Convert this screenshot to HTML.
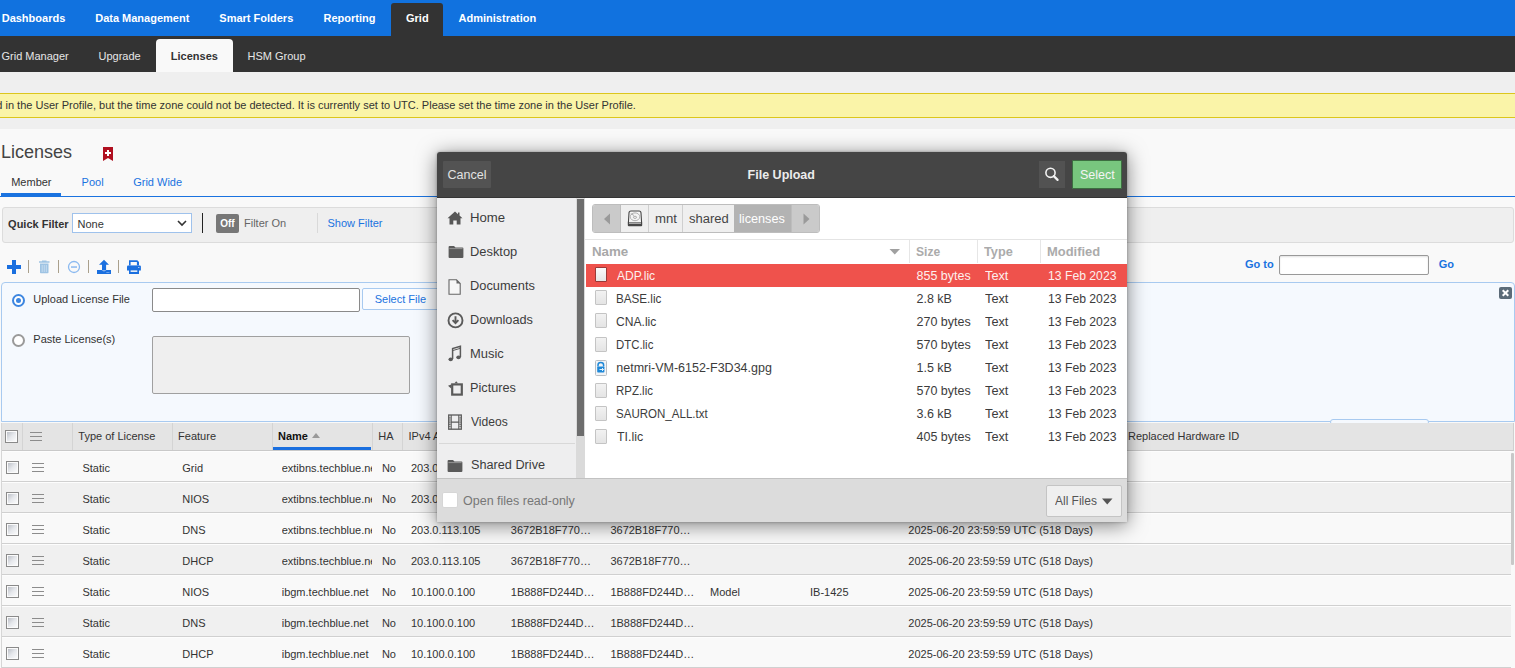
<!DOCTYPE html>
<html><head><meta charset="utf-8">
<style>
*{box-sizing:border-box;margin:0;padding:0}
html,body{width:1515px;height:668px;overflow:hidden;background:#f9f9f9;font-family:"Liberation Sans",sans-serif;font-size:11px;color:#333}
.a{position:absolute;white-space:nowrap}
.t{position:absolute;white-space:nowrap;line-height:14px;height:14px}
#nav{position:absolute;left:0;top:0;width:1515px;height:36px;background:#1172df}
#nav .t{color:#fff;font-weight:bold;top:11px}
#sub{position:absolute;left:0;top:36px;width:1515px;height:36px;background:#333}
#sub .t{color:#e6e6e6;top:13px}
#grey{position:absolute;left:0;top:72px;width:1515px;height:57px;background:#efefef}
#banner{position:absolute;left:-2px;top:93px;width:1520px;height:25px;background:#faf4a8;border-top:1px solid #dcc61c;border-bottom:1px solid #dcc61c}
.blue{color:#1a73e0}
.cb{position:absolute;width:13px;height:13px;border:1px solid #8a8a8a;background:linear-gradient(135deg,#b4b8c0 0%,#e6e8ec 50%,#fff 100%);box-shadow:inset 0 0 0 1px #fbfbfb}
.ham{position:absolute;width:12px;height:9px;border-top:1px solid #8c8c8c;border-bottom:1px solid #8c8c8c}
.ham:after{content:"";position:absolute;left:0;right:0;top:3px;height:1px;background:#8c8c8c}
.row{position:absolute;left:2px;width:1509px;height:31px;border-bottom:1px solid #d0d0d0;box-shadow:inset 0 1px 0 #fdfdfd}
.row .t{top:10px}
.vsep{position:absolute;width:1px;background:#d4d4d4}
</style></head><body>

<div id="nav">
  <div class="t" style="left:1.7px">Dashboards</div>
  <div class="t" style="left:95.2px">Data Management</div>
  <div class="t" style="left:219.3px">Smart Folders</div>
  <div class="t" style="left:323.5px">Reporting</div>
  <div class="a" style="left:391px;top:3px;width:52px;height:33px;background:#333;border-radius:3px 3px 0 0"></div>
  <div class="t" style="left:406px">Grid</div>
  <div class="t" style="left:458.6px">Administration</div>
</div>
<div id="sub">
  <div class="t" style="left:1.5px">Grid Manager</div>
  <div class="t" style="left:98.5px">Upgrade</div>
  <div class="a" style="left:156px;top:3px;width:77px;height:33px;background:#f9f9f9;border-radius:4px 4px 0 0"></div>
  <div class="t" style="left:170.8px;color:#333;font-weight:bold">Licenses</div>
  <div class="t" style="left:247.5px">HSM Group</div>
</div>
<div id="grey"></div>
<div id="banner"><div class="t" style="left:-1.7px;top:4px;color:#333">d in the User Profile, but the time zone could not be detected. It is currently set to UTC. Please set the time zone in the User Profile.</div></div>

<!-- page header -->
<div class="a" style="left:0.9px;top:141.3px;font-size:18px;line-height:22px;color:#444">Licenses</div>
<svg class="a" style="left:103px;top:147px" width="10" height="14" viewBox="0 0 10 14"><path d="M0 0H10V14L5 11L0 14Z" fill="#b01020"/><path d="M4 3H6V5H8V7H6V9H4V7H2V5H4Z" fill="#fff"/></svg>
<div class="t" style="left:11.2px;top:175px">Member</div>
<div class="t blue" style="left:81.6px;top:175px">Pool</div>
<div class="t blue" style="left:133.2px;top:175px">Grid Wide</div>
<div class="a" style="left:0;top:196px;width:1515px;height:1px;background:#1a73e0"></div>
<div class="a" style="left:1px;top:193px;width:60px;height:4px;background:#1a73e0"></div>

<!-- filter bar -->
<div class="a" style="left:2px;top:207px;width:1512px;height:36px;background:#efefef;border:1px solid #dcdcdc;border-radius:3px"></div>
<div class="t" style="left:8.1px;top:217px;font-weight:bold">Quick Filter</div>
<div class="a" style="left:72px;top:213px;width:120px;height:20px;background:#fff;border:1px solid #9fc2ec"></div>
<div class="t" style="left:77.5px;top:217px">None</div>
<svg class="a" style="left:177px;top:219.6px" width="10" height="7" viewBox="0 0 10 7"><path d="M1 1L5 5L9 1" stroke="#333" stroke-width="1.6" fill="none"/></svg>
<div class="a" style="left:202px;top:213px;width:1.2px;height:20px;background:#222"></div>
<div class="a" style="left:216px;top:214px;width:23px;height:19px;background:#777;border-radius:2px;color:#fff;font-weight:bold;font-size:10px;line-height:19px;text-align:center">Off</div>
<div class="t" style="left:244.0px;top:216px;color:#666">Filter On</div>
<div class="a" style="left:317px;top:213px;width:1px;height:20px;background:#d9d9d9"></div>
<div class="t blue" style="left:327.5px;top:216px">Show Filter</div>

<!-- toolbar -->
<svg class="a" style="left:0;top:255px" width="150" height="24" viewBox="0 255 150 24">
  <path d="M7 267H21M14 260V274" stroke="#1a6fdf" stroke-width="4"/>
  <rect x="28" y="260" width="1" height="13" fill="#aaa08c"/>
  <rect x="58" y="260" width="1" height="13" fill="#aaa08c"/>
  <rect x="88" y="260" width="1" height="13" fill="#aaa08c"/>
  <rect x="118" y="260" width="1" height="13" fill="#aaa08c"/>
  <path d="M39 262H49.5M42 261.3H46.5" stroke="#9ec3e3" stroke-width="1.4"/>
  <path d="M40 263.5H48.5V272.5Q48.5 273.3 47.7 273.3H40.8Q40 273.3 40 272.5Z" fill="#9ec3e3"/>
  <path d="M42.2 265V272M44.25 265V272M46.3 265V272" stroke="#cfe2f2" stroke-width="0.8"/>
  <circle cx="74" cy="267" r="5.5" stroke="#8cbaf0" stroke-width="1.3" fill="none"/>
  <rect x="71" y="266.3" width="6" height="1.5" fill="#8cbaf0"/>
  <path d="M104 259.8L109 264.8H106.1V270.5H102V264.8H99Z" fill="#1a6fdf"/>
  <path d="M97 269.9H101.6Q104 272.6 106.4 269.9H111V274H97Z" fill="#1a6fdf"/>
  <rect x="106.3" y="272.1" width="3.2" height="0.7" fill="#8fb8ee"/>
  <path d="M129 260.2H137.3L139 261.9V265.5H129Z" fill="#1a6fdf"/>
  <rect x="130.6" y="262" width="6.3" height="3.6" fill="#f9f9f9"/>
  <path d="M127 266.5Q127 265.4 128.1 265.4H139.8Q140.9 265.4 140.9 266.5V270.5H127Z" fill="#1a6fdf"/>
  <rect x="138.1" y="267" width="1.3" height="1" fill="#b0cdf3"/>
  <path d="M129 269.7H139V274H129Z" fill="#1a6fdf"/>
  <rect x="130.6" y="270.4" width="6.7" height="1.5" fill="#f9f9f9"/>
</svg>
<div class="t blue" style="left:1245.0px;top:257px;font-weight:bold">Go to</div>
<div class="a" style="left:1279px;top:255px;width:150px;height:20px;background:#fff;border:1px solid #999;border-radius:2px;box-shadow:inset 0 1px 2px rgba(0,0,0,.12)"></div>
<div class="t blue" style="left:1438.7px;top:257px;font-weight:bold">Go</div>

<!-- upload panel -->
<div class="a" style="left:1px;top:282px;width:1514px;height:140px;background:#f5f9fe;border:1px solid #a8caf0;border-radius:4px 4px 0 0"></div>
<div class="a" style="left:11.5px;top:294px;width:13px;height:13px;border-radius:50%;border:2px solid #3d86e0;background:#fff"></div>
<div class="a" style="left:15.5px;top:298px;width:5px;height:5px;border-radius:50%;background:#3d86e0"></div>
<div class="t" style="left:33.3px;top:292px">Upload License File</div>
<div class="a" style="left:152px;top:288px;width:208px;height:24px;background:#fff;border:1px solid #8a8a8a;border-radius:2px"></div>
<div class="a" style="left:362px;top:288px;width:100px;height:22px;background:#fafcff;border:1px solid #a8caf0;border-radius:2px"></div>
<div class="t blue" style="left:374.7px;top:292px">Select File</div>
<div class="a" style="left:11.5px;top:334px;width:13px;height:13px;border-radius:50%;border:2px solid #9a9a9a;background:#fff"></div>
<div class="t" style="left:33.3px;top:332px">Paste License(s)</div>
<div class="a" style="left:152px;top:336px;width:258px;height:58px;background:#efefef;border:1px solid #a0a0a0;border-radius:2px"></div>
<div class="a" style="left:1499px;top:287px;width:13px;height:12px;background:#5b6b78;border-radius:2px"></div>
<svg class="a" style="left:1499px;top:287px" width="13" height="12" viewBox="0 0 13 12"><path d="M3.7 3.2L9.3 8.8M9.3 3.2L3.7 8.8" stroke="#fff" stroke-width="2"/></svg>
<div class="a" style="left:1330px;top:419px;width:99px;height:6px;border:1px solid #a8caf0;border-radius:3px;background:#f5f9fe"></div>

<!-- table header -->
<div class="a" style="left:2px;top:423px;width:1512px;height:28px;background:#e4e4e4;border-bottom:1px solid #c9c9c9;border-right:1px solid #cfcfcf"></div>
<div class="vsep" style="left:22px;top:423px;height:27px"></div>
<div class="vsep" style="left:72px;top:423px;height:27px"></div>
<div class="vsep" style="left:172px;top:423px;height:27px"></div>
<div class="vsep" style="left:272px;top:423px;height:27px"></div>
<div class="vsep" style="left:372px;top:423px;height:27px"></div>
<div class="vsep" style="left:402px;top:423px;height:27px"></div>
<div class="cb" style="left:5px;top:430px"></div>
<div class="ham" style="left:30px;top:432px"></div>
<div class="t" style="left:78.3px;top:429px">Type of License</div>
<div class="t" style="left:178.1px;top:429px">Feature</div>
<div class="t" style="left:278.0px;top:429px;font-weight:bold;color:#111">Name</div>
<svg class="a" style="left:312px;top:433px" width="8" height="5" viewBox="0 0 8 5"><path d="M0 5L4 0L8 5Z" fill="#999"/></svg>
<div class="a" style="left:273px;top:447px;width:98px;height:3px;background:#1a6fdf"></div>
<div class="t" style="left:378.3px;top:429px">HA</div>
<div class="t" style="left:408.5px;top:429px">IPv4 Address</div>
<div class="t" style="left:1128.0px;top:429px">Replaced Hardware ID</div>

<div class="row" style="top:451px;background:#f9f9f9">
<div class="cb" style="left:4px;top:10px"></div><div class="ham" style="left:30px;top:12px"></div>
<div class="t" style="left:80.4px">Static</div>
<div class="t" style="left:180.3px">Grid</div>
<div class="t" style="left:279.7px;width:90px;overflow:hidden">extibns.techblue.net</div>
<div class="t" style="left:379.9px">No</div>
<div class="t" style="left:408.9px">203.0.113.105</div>
<div class="t" style="left:508.8px">3672B18F770…</div>
<div class="t" style="left:608.4px">3672B18F770…</div>
</div>
<div class="row" style="top:482px;background:#f0f0f0">
<div class="cb" style="left:4px;top:10px"></div><div class="ham" style="left:30px;top:12px"></div>
<div class="t" style="left:80.4px">Static</div>
<div class="t" style="left:180.3px">NIOS</div>
<div class="t" style="left:279.7px;width:90px;overflow:hidden">extibns.techblue.net</div>
<div class="t" style="left:379.9px">No</div>
<div class="t" style="left:408.9px">203.0.113.105</div>
<div class="t" style="left:508.8px">3672B18F770…</div>
<div class="t" style="left:608.4px">3672B18F770…</div>
</div>
<div class="row" style="top:513px;background:#f9f9f9">
<div class="cb" style="left:4px;top:10px"></div><div class="ham" style="left:30px;top:12px"></div>
<div class="t" style="left:80.4px">Static</div>
<div class="t" style="left:180.3px">DNS</div>
<div class="t" style="left:279.7px;width:90px;overflow:hidden">extibns.techblue.net</div>
<div class="t" style="left:379.9px">No</div>
<div class="t" style="left:408.9px">203.0.113.105</div>
<div class="t" style="left:508.8px">3672B18F770…</div>
<div class="t" style="left:608.4px">3672B18F770…</div>
<div class="t" style="left:906.3px">2025-06-20 23:59:59 UTC (518 Days)</div>
</div>
<div class="row" style="top:544px;background:#f0f0f0">
<div class="cb" style="left:4px;top:10px"></div><div class="ham" style="left:30px;top:12px"></div>
<div class="t" style="left:80.4px">Static</div>
<div class="t" style="left:180.3px">DHCP</div>
<div class="t" style="left:279.7px;width:90px;overflow:hidden">extibns.techblue.net</div>
<div class="t" style="left:379.9px">No</div>
<div class="t" style="left:408.9px">203.0.113.105</div>
<div class="t" style="left:508.8px">3672B18F770…</div>
<div class="t" style="left:608.4px">3672B18F770…</div>
<div class="t" style="left:906.3px">2025-06-20 23:59:59 UTC (518 Days)</div>
</div>
<div class="row" style="top:575px;background:#f9f9f9">
<div class="cb" style="left:4px;top:10px"></div><div class="ham" style="left:30px;top:12px"></div>
<div class="t" style="left:80.4px">Static</div>
<div class="t" style="left:180.3px">NIOS</div>
<div class="t" style="left:279.7px;width:90px;overflow:hidden">ibgm.techblue.net</div>
<div class="t" style="left:379.9px">No</div>
<div class="t" style="left:408.9px">10.100.0.100</div>
<div class="t" style="left:508.8px">1B888FD244D…</div>
<div class="t" style="left:608.4px">1B888FD244D…</div>
<div class="t" style="left:708.1px">Model</div>
<div class="t" style="left:808.0px">IB-1425</div>
<div class="t" style="left:906.3px">2025-06-20 23:59:59 UTC (518 Days)</div>
</div>
<div class="row" style="top:606px;background:#f0f0f0">
<div class="cb" style="left:4px;top:10px"></div><div class="ham" style="left:30px;top:12px"></div>
<div class="t" style="left:80.4px">Static</div>
<div class="t" style="left:180.3px">DNS</div>
<div class="t" style="left:279.7px;width:90px;overflow:hidden">ibgm.techblue.net</div>
<div class="t" style="left:379.9px">No</div>
<div class="t" style="left:408.9px">10.100.0.100</div>
<div class="t" style="left:508.8px">1B888FD244D…</div>
<div class="t" style="left:608.4px">1B888FD244D…</div>
<div class="t" style="left:906.3px">2025-06-20 23:59:59 UTC (518 Days)</div>
</div>
<div class="row" style="top:637px;background:#f9f9f9">
<div class="cb" style="left:4px;top:10px"></div><div class="ham" style="left:30px;top:12px"></div>
<div class="t" style="left:80.4px">Static</div>
<div class="t" style="left:180.3px">DHCP</div>
<div class="t" style="left:279.7px;width:90px;overflow:hidden">ibgm.techblue.net</div>
<div class="t" style="left:379.9px">No</div>
<div class="t" style="left:408.9px">10.100.0.100</div>
<div class="t" style="left:508.8px">1B888FD244D…</div>
<div class="t" style="left:608.4px">1B888FD244D…</div>
<div class="t" style="left:906.3px">2025-06-20 23:59:59 UTC (518 Days)</div>
</div>
<div class="a" style="left:1511px;top:453px;width:3px;height:112px;background:#c8c8c8;border-radius:1px"></div>
<div class="a" style="left:1px;top:423px;width:1px;height:245px;background:#d6d6d6"></div>

<style>
#dlg{position:absolute;left:437px;top:152px;width:690px;height:370px;background:#dcdcdc;border-radius:3px 3px 0 0;box-shadow:0 3px 20px rgba(0,0,0,.5),0 0 3px rgba(0,0,0,.3);font-size:12.5px;color:#3c3c3c;overflow:hidden}
#dlg .d{position:absolute;white-space:nowrap;line-height:16px;height:16px;margin-top:1px}
#dlg .hd{margin-top:0}
#dlg .ic{position:absolute}
.fic{position:absolute;left:11px;width:12px;height:15px;background:linear-gradient(#f2f2f2,#e4e4e4);border:1px solid #c4c4c4;border-radius:1px}
</style>
<div id="dlg">
  <!-- header -->
  <div class="a" style="left:0;top:0;width:690px;height:46px;background:#454545;border-bottom:1px solid #353535"></div>
  <div class="a" style="left:6px;top:9px;width:48px;height:27px;background:#535353;border-radius:1px"></div>
  <div class="d hd" style="left:10.6px;top:14.6px;color:#e2e2e2">Cancel</div>
  <div class="d hd" style="left:310.6px;top:14.6px;color:#ececec;font-weight:bold">File Upload</div>
  <div class="a" style="left:602px;top:9px;width:26px;height:27px;background:#525252;border-radius:0"></div>
  <svg class="ic" style="left:602px;top:9px" width="26" height="26" viewBox="0 0 26 26"><circle cx="11.5" cy="11.8" r="4.6" stroke="#f2f2f2" stroke-width="1.6" fill="none"/><path d="M14.8 15.1L18.6 18.9" stroke="#f2f2f2" stroke-width="2.2" stroke-linecap="round"/></svg>
  <div class="a" style="left:635px;top:8px;width:50px;height:29px;background:#78c67e;border:1px solid #3c6e40;border-radius:1px"></div>
  <div class="d hd" style="left:643px;top:14.6px;color:#f4f4f4">Select</div>

  <!-- sidebar -->
  <div class="a" style="left:0;top:46px;width:139px;height:280px;background:#eeeeef"></div>
  <div class="a" style="left:139px;top:46px;width:9px;height:280px;background:#dadada"></div>
  <div class="a" style="left:140px;top:47px;width:7px;height:237px;background:#6d6d6d"></div>

  <svg class="ic" style="left:10px;top:59px" width="16" height="15" viewBox="0 0 16 15"><path d="M8 0.5L0.5 7.3H2.5V13.5H6.3V9.5H9.7V13.5H13.5V7.3H15.5L12.5 4.6V1.5H11V3.3Z" fill="#575757"/></svg>
  <div class="d" style="left:33.1px;top:57.4px;transform:scaleX(1.055);transform-origin:0 0">Home</div>
  <svg class="ic" style="left:10.5px;top:93px" width="16" height="14" viewBox="0 0 16 14"><path d="M0.6 2Q0.6 1 1.6 1H6L7.5 2.5H14.4Q15.4 2.5 15.4 3.5V12Q15.4 13 14.4 13H1.6Q0.6 13 0.6 12Z" fill="#5a5a5a"/><path d="M1.4 3.6H14.6" stroke="#9a9a9a" stroke-width="0.9"/></svg>
  <div class="d" style="left:33.1px;top:91px;transform:scaleX(1.03);transform-origin:0 0">Desktop</div>
  <svg class="ic" style="left:11px;top:126.5px" width="14" height="16" viewBox="0 0 14 16"><path d="M1 0.8H8.5L12.2 4.5V15.2H1Z" fill="#f6f6f6" stroke="#666" stroke-width="1.1"/><path d="M8.5 0.8L12.2 4.5H8.5Z" fill="#666"/></svg>
  <div class="d" style="left:33.1px;top:124.6px;transform:scaleX(1.026);transform-origin:0 0">Documents</div>
  <svg class="ic" style="left:9.5px;top:159.5px" width="17" height="17" viewBox="0 0 17 17"><circle cx="8.5" cy="8.4" r="7" fill="none" stroke="#5a5a5a" stroke-width="1.9"/><path d="M8.5 4.2V10.8M5.6 8.2L8.5 11.2L11.4 8.2" fill="none" stroke="#5a5a5a" stroke-width="1.9"/></svg>
  <div class="d" style="left:33.1px;top:159.3px;transform:scaleX(1.017);transform-origin:0 0">Downloads</div>
  <svg class="ic" style="left:10px;top:193px" width="16" height="18" viewBox="0 0 16 18"><path d="M5.6 14V3.5L13.4 1.2V12" fill="none" stroke="#5a5a5a" stroke-width="1.5"/><path d="M5.6 5.6L13.4 3.3" stroke="#5a5a5a" stroke-width="1"/><ellipse cx="3.7" cy="14.3" rx="2.2" ry="1.9" fill="#5a5a5a"/><ellipse cx="11.5" cy="12.3" rx="2.2" ry="1.9" fill="#5a5a5a"/></svg>
  <div class="d" style="left:33.1px;top:193px;transform:scaleX(1.034);transform-origin:0 0">Music</div>
  <svg class="ic" style="left:10px;top:228px" width="16" height="16" viewBox="0 0 16 16"><rect x="5.2" y="4.4" width="9.6" height="10.2" fill="none" stroke="#5a5a5a" stroke-width="2.2"/><path d="M7.5 3.3L9.2 1.2L11 3.3Z" fill="#5a5a5a"/><path d="M1 5.8L4.2 4.6V8.4Z" fill="#5a5a5a"/></svg>
  <div class="d" style="left:33.1px;top:227px;transform:scaleX(1.017);transform-origin:0 0">Pictures</div>
  <svg class="ic" style="left:10px;top:262px" width="16" height="16" viewBox="0 0 16 16"><rect x="1.7" y="1" width="12.6" height="14.2" fill="none" stroke="#5a5a5a" stroke-width="1.3"/><path d="M4.2 1V15.2M11.8 1V15.2M4.2 8.1H11.8" stroke="#5a5a5a" stroke-width="1.1"/><path d="M2.9 3.2V13M13.1 3.2V13" stroke="#5a5a5a" stroke-width="1.2" stroke-dasharray="1.2 1"/></svg>
  <div class="d" style="left:34.1px;top:261px;transform:scaleX(0.967);transform-origin:0 0">Videos</div>
  <div class="a" style="left:2px;top:291px;width:136px;height:1px;background:#d8d8d8"></div>
  <svg class="ic" style="left:10px;top:307px" width="16" height="14" viewBox="0 0 16 14"><path d="M0.6 2Q0.6 1 1.6 1H6L7.5 2.5H14.4Q15.4 2.5 15.4 3.5V12Q15.4 13 14.4 13H1.6Q0.6 13 0.6 12Z" fill="#5a5a5a"/><path d="M1.4 3.6H14.6" stroke="#9a9a9a" stroke-width="0.9"/></svg>
  <div class="d" style="left:33.5px;top:304.4px;transform:scaleX(1.015);transform-origin:0 0">Shared Drive</div>

  <!-- right pane -->
  <div class="a" style="left:148px;top:46px;width:542px;height:280px;background:#fff"></div>
  <div class="a" style="left:155px;top:52px;width:228px;height:29px;background:#efefef;border:1px solid #bdbdbd;border-radius:3px;overflow:hidden">
    <div class="a" style="left:0;top:0;width:28px;height:27px;background:#cacaca;border-right:1px solid #bdbdbd"></div>
    <div class="a" style="left:55px;top:0;width:1px;height:27px;background:#cfcfcf"></div>
    <div class="a" style="left:89px;top:0;width:1px;height:27px;background:#cfcfcf"></div>
    <div class="a" style="left:141px;top:0;width:57px;height:27px;background:#b3b3b3"></div>
    <div class="a" style="left:198px;top:0;width:29px;height:27px;background:#cacaca;border-left:1px solid #bdbdbd"></div>
  </div>
  <svg class="ic" style="left:164px;top:59.5px" width="12" height="14" viewBox="0 0 12 14"><path d="M9 1.5L3 7L9 12.5Z" fill="#9a9a9a"/></svg>
  <svg class="ic" style="left:363px;top:59.5px" width="12" height="14" viewBox="0 0 12 14"><path d="M3.5 1.5L9.5 7L3.5 12.5Z" fill="#9a9a9a"/></svg>
  <svg class="ic" style="left:190px;top:57.8px" width="16" height="17" viewBox="0 0 16 17"><path d="M2 3Q2 1 4 1H12Q14 1 14 3L14.6 12.5H1.4Z" fill="#f4f4f4" stroke="#444" stroke-width="1.1"/><rect x="0.8" y="12" width="14.4" height="4.2" rx="1" fill="#474747"/><rect x="2" y="12.6" width="12" height="1" fill="#e8e8e8"/><ellipse cx="8" cy="6.8" rx="4.8" ry="3.9" fill="none" stroke="#a8a8a8" stroke-width="0.9"/><ellipse cx="8" cy="7.3" rx="1.6" ry="1.1" fill="none" stroke="#999" stroke-width="0.8"/><path d="M3.8 3.6L7 5.5" stroke="#999" stroke-width="0.8"/></svg>
  <div class="d" style="left:217.9px;top:58px;color:#444;transform:scaleX(1.055);transform-origin:0 0">mnt</div>
  <div class="d" style="left:251.8px;top:58px;color:#444;transform:scaleX(1.04);transform-origin:0 0">shared</div>
  <div class="d" style="left:302.25px;top:58px;color:#fff;transform:scaleX(1.014);transform-origin:0 0">licenses</div>
  <div class="a" style="left:148px;top:87px;width:542px;height:1px;background:#e4e4e4"></div>

  <div class="d" style="left:155.1px;top:90.8px;color:#a8a8a8;font-weight:bold;transform:scaleX(1.065);transform-origin:0 0">Name</div>
  <svg class="ic" style="left:452px;top:96px" width="12" height="8" viewBox="0 0 12 8"><path d="M0.5 1H11L5.75 6.5Z" fill="#a0a0a0"/></svg>
  <div class="a" style="left:472px;top:88px;width:1px;height:23px;background:#e6e6e6"></div>
  <div class="a" style="left:540px;top:88px;width:1px;height:23px;background:#e6e6e6"></div>
  <div class="a" style="left:603px;top:88px;width:1px;height:23px;background:#e6e6e6"></div>
  <div class="d" style="left:478.9px;top:90.8px;color:#ababab;font-weight:bold;transform:scaleX(0.965);transform-origin:0 0">Size</div>
  <div class="d" style="left:547px;top:90.8px;color:#ababab;font-weight:bold;transform:scaleX(1.02);transform-origin:0 0">Type</div>
  <div class="d" style="left:610px;top:90.8px;color:#ababab;font-weight:bold;transform:scaleX(1.035);transform-origin:0 0">Modified</div>

  <div class="a" style="left:149px;top:112px;width:541px;height:22.5px;background:#ef524c"></div>
  <div class="fic" style="left:157.5px;top:115.3px;background:linear-gradient(#fafafa,#e6e6e6);border-color:#9a3a38"></div>
<div class="d" style="left:180.00px;top:115.0px;color:#fdf0ee;transform-origin:0 0;transform:scaleX(0.969)">ADP.lic</div>
<div class="d" style="left:479.5px;top:115.0px;color:#fdf0ee">855 bytes</div>
<div class="d" style="left:547.85px;top:115.0px;color:#fdf0ee;transform-origin:0 0;transform:scaleX(1.02)">Text</div>
<div class="d" style="left:610.75px;top:115.0px;color:#fdf0ee;transform-origin:0 0;transform:scaleX(0.975)">13 Feb 2023</div>
<div class="fic" style="left:157.5px;top:138.4px;"></div>
<div class="d" style="left:179.07px;top:138.1px;color:#3c3c3c;transform-origin:0 0;transform:scaleX(0.933)">BASE.lic</div>
<div class="d" style="left:479.5px;top:138.1px;color:#3c3c3c">2.8 kB</div>
<div class="d" style="left:547.85px;top:138.1px;color:#3c3c3c;transform-origin:0 0;transform:scaleX(1.02)">Text</div>
<div class="d" style="left:610.75px;top:138.1px;color:#3c3c3c;transform-origin:0 0;transform:scaleX(0.975)">13 Feb 2023</div>
<div class="fic" style="left:157.5px;top:161.4px;"></div>
<div class="d" style="left:179.40px;top:161.1px;color:#3c3c3c;transform-origin:0 0;transform:scaleX(0.967)">CNA.lic</div>
<div class="d" style="left:479.5px;top:161.1px;color:#3c3c3c">270 bytes</div>
<div class="d" style="left:547.85px;top:161.1px;color:#3c3c3c;transform-origin:0 0;transform:scaleX(1.02)">Text</div>
<div class="d" style="left:610.75px;top:161.1px;color:#3c3c3c;transform-origin:0 0;transform:scaleX(0.975)">13 Feb 2023</div>
<div class="fic" style="left:157.5px;top:184.5px;"></div>
<div class="d" style="left:179.09px;top:184.2px;color:#3c3c3c;transform-origin:0 0;transform:scaleX(0.911)">DTC.lic</div>
<div class="d" style="left:479.5px;top:184.2px;color:#3c3c3c">570 bytes</div>
<div class="d" style="left:547.85px;top:184.2px;color:#3c3c3c;transform-origin:0 0;transform:scaleX(1.02)">Text</div>
<div class="d" style="left:610.75px;top:184.2px;color:#3c3c3c;transform-origin:0 0;transform:scaleX(0.975)">13 Feb 2023</div>
<svg class="ic" style="left:157.5px;top:207.5px" width="12" height="16" viewBox="0 0 12 16"><rect x="0.5" y="0.5" width="11" height="15" rx="1" fill="#f2f4f6" stroke="#b8bec4"/><path d="M3 6.5V5Q3 2.5 5.8 2.5Q8.6 2.5 8.6 5V6.5" fill="none" stroke="#1e88d8" stroke-width="1.5"/><rect x="2.2" y="6.5" width="7.2" height="6" rx="0.8" fill="#1e88d8"/><path d="M4.5 9.5H8.5M7 8L8.5 9.5L7 11" fill="none" stroke="#dff0fc" stroke-width="1"/></svg>
<div class="d" style="left:179.25px;top:207.2px;color:#3c3c3c;transform-origin:0 0;transform:scaleX(1.0)">netmri-VM-6152-F3D34.gpg</div>
<div class="d" style="left:479.5px;top:207.2px;color:#3c3c3c">1.5 kB</div>
<div class="d" style="left:547.85px;top:207.2px;color:#3c3c3c;transform-origin:0 0;transform:scaleX(1.02)">Text</div>
<div class="d" style="left:610.75px;top:207.2px;color:#3c3c3c;transform-origin:0 0;transform:scaleX(0.975)">13 Feb 2023</div>
<div class="fic" style="left:157.5px;top:230.6px;"></div>
<div class="d" style="left:179.08px;top:230.3px;color:#3c3c3c;transform-origin:0 0;transform:scaleX(0.916)">RPZ.lic</div>
<div class="d" style="left:479.5px;top:230.3px;color:#3c3c3c">570 bytes</div>
<div class="d" style="left:547.85px;top:230.3px;color:#3c3c3c;transform-origin:0 0;transform:scaleX(1.02)">Text</div>
<div class="d" style="left:610.75px;top:230.3px;color:#3c3c3c;transform-origin:0 0;transform:scaleX(0.975)">13 Feb 2023</div>
<div class="fic" style="left:157.5px;top:253.7px;"></div>
<div class="d" style="left:179.43px;top:253.4px;color:#3c3c3c;transform-origin:0 0;transform:scaleX(0.923)">SAURON_ALL.txt</div>
<div class="d" style="left:479.5px;top:253.4px;color:#3c3c3c">3.6 kB</div>
<div class="d" style="left:547.85px;top:253.4px;color:#3c3c3c;transform-origin:0 0;transform:scaleX(1.02)">Text</div>
<div class="d" style="left:610.75px;top:253.4px;color:#3c3c3c;transform-origin:0 0;transform:scaleX(0.975)">13 Feb 2023</div>
<div class="fic" style="left:157.5px;top:276.7px;"></div>
<div class="d" style="left:179.75px;top:276.4px;color:#3c3c3c;transform-origin:0 0;transform:scaleX(0.994)">TI.lic</div>
<div class="d" style="left:479.5px;top:276.4px;color:#3c3c3c">405 bytes</div>
<div class="d" style="left:547.85px;top:276.4px;color:#3c3c3c;transform-origin:0 0;transform:scaleX(1.02)">Text</div>
<div class="d" style="left:610.75px;top:276.4px;color:#3c3c3c;transform-origin:0 0;transform:scaleX(0.975)">13 Feb 2023</div>

  <!-- footer -->
  <div class="a" style="left:0;top:326px;width:690px;height:1px;background:#c2c2c2"></div>
  <div class="a" style="left:6.3px;top:340.8px;width:14px;height:14px;background:#fff;border-radius:1px;box-shadow:0 0 0 0.5px #d0d0d0"></div>
  <div class="d" style="left:26px;top:340px;color:#777">Open files read-only</div>
  <div class="a" style="left:609px;top:332.5px;width:76px;height:32px;background:#efefef;border:1px solid #c4c4c4;border-radius:2px"></div>
  <div class="d" style="left:618px;top:340.1px;color:#555;transform:scaleX(0.957);transform-origin:0 0">All Files</div>
  <svg class="ic" style="left:665px;top:346px" width="11" height="7" viewBox="0 0 11 7"><path d="M0 0.4H10.5L5.25 6.6Z" fill="#555"/></svg>
</div>

</body></html>
